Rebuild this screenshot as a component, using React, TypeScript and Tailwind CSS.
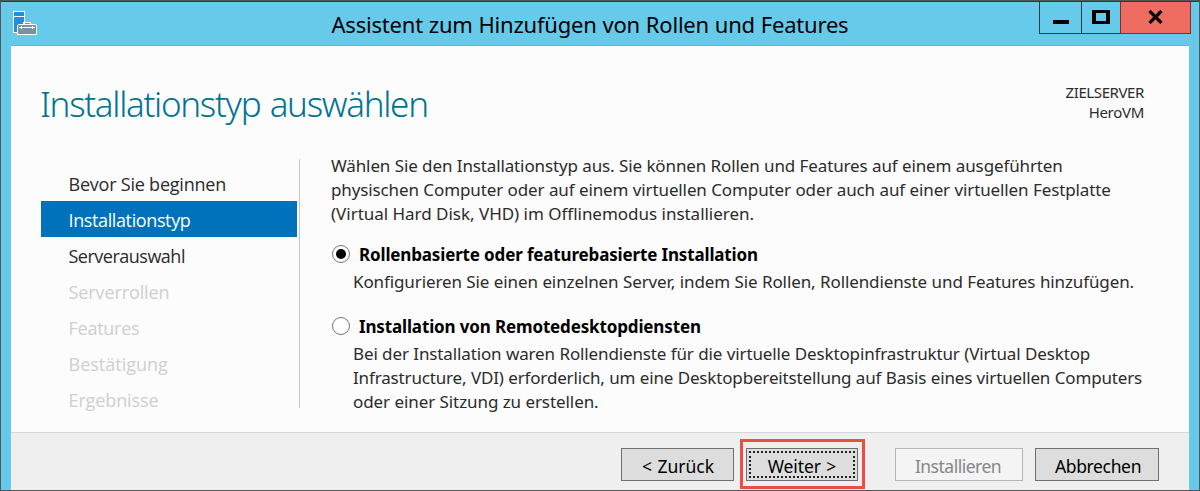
import type { ReactNode } from "react";

const steps = [
  { label: "Bevor Sie beginnen", style: "text-[#2b2b2b] tracking-[-0.22px]" },
  { label: "Installationstyp", style: "bg-[#0072bc] text-white tracking-[-0.38px]" },
  { label: "Serverauswahl", style: "text-[#2b2b2b] tracking-[-0.5px]" },
  { label: "Serverrollen", style: "text-[#cfcfcf] tracking-[-0.1px]" },
  { label: "Features", style: "text-[#cfcfcf] tracking-[-0.25px]" },
  { label: "Bestätigung", style: "text-[#cfcfcf]" },
  { label: "Ergebnisse", style: "text-[#cfcfcf] tracking-[-0.12px]" },
];

function Radio({ checked = false }: { checked?: boolean }) {
  return (
    <span className="flex size-[18px] shrink-0 items-center justify-center rounded-full border border-[#777] bg-white">
      {checked && <span className="size-[10px] rounded-full bg-black" />}
    </span>
  );
}

function Option({ title, titleStyle, checked, children }: { title: string; titleStyle: string; checked?: boolean; children: ReactNode }) {
  return (
    <div>
      <label className="flex h-6 items-start pt-[3px]">
        <Radio checked={checked} />
        <span className={`-mt-[2px] ml-[9px] font-bold text-black ${titleStyle}`}>{title}</span>
      </label>
      <div className="mt-1 pl-[21px]">{children}</div>
    </div>
  );
}

function ServerIcon() {
  return (
    <svg width="24" height="24" viewBox="0 0 24 24" shapeRendering="crispEdges">
      <rect x="0.5" y="0.5" width="11" height="21" fill="#2190dc" stroke="#fff" />
      <path d="M1 5.5H11" stroke="#fff" />
      <path d="M10.5 14V11.5H17.5V14" fill="none" stroke="#fff" />
      <path d="M12 12.5H16" stroke="#76909f" />
      <path d="M5.5 13.5H22.5L23.5 14.5V23.5H4.5V14.5Z" fill="#7893a5" stroke="#fff" />
      <path d="M6 16.5H22M8.500 15V18M19.500 15V18" stroke="#fff" />
    </svg>
  );
}

export default function App() {
  return (
    <div className="flex h-[491px] w-[1200px] flex-col overflow-hidden border border-[#555558] bg-[#66caea] font-['Noto_Sans',sans-serif] text-[17px] leading-6 text-[#2b2b2b]">
      <header className="flex h-[44px] shrink-0 items-start border-t border-[#2f3a42]">
        <div className="w-[238px] pt-[9px] pl-3">
          <ServerIcon />
        </div>
        <h1 className="flex-1 pt-[7px] pl-[92.5px] text-[22px] leading-[31px] tracking-[-0.2px] [word-spacing:0.3px] whitespace-nowrap text-black">
          Assistent zum Hinzufügen von Rollen und Features
        </h1>
        <div className="mr-[8px] flex h-[32px] border border-t-0 border-[#1d3d4b]">
          <button className="flex w-[41px] justify-center pt-[18px]">
            <span className="h-[4px] w-4 bg-black" />
          </button>
          <button className="flex w-[39px] justify-center border-l border-[#1d3d4b] pt-[8px]">
            <span className="h-[14px] w-[18px] border-4 border-t-[3px] border-b-[3px] border-black" />
          </button>
          <button className="-mr-px -mb-px flex w-[71px] justify-center border border-t-0 border-[#8a2b26] bg-[#ee6c60] pt-[8px]">
            <svg width="15" height="14" viewBox="0 0 15 14">
              <path d="M1.500 1L13.500 13M13.500 1L1.500 13" stroke="#000" strokeWidth="3.2" />
            </svg>
          </button>
        </div>
      </header>

      <div className="mx-[10px] flex min-h-0 flex-1 flex-col border-t border-[#70b2cc] bg-[#fcfcfc]">
        <div className="flex h-[107px] shrink-0 justify-between pr-[45px] pl-[29px]">
          <h2 className="pt-[31px] text-[35px] leading-[54px] font-light tracking-[-1.3px] [word-spacing:1.5px] whitespace-nowrap text-[#007394]">
            Installationstyp auswählen
          </h2>
          <div className="pt-[36px] text-right text-[15px] leading-5">
            <div className="tracking-[-0.4px]">ZIELSERVER</div>
            <div className="tracking-[-0.3px]">HeroVM</div>
          </div>
        </div>

        <main className="flex h-[279px] shrink-0 pl-[30px]">
          <nav className="mt-3 w-[256px] font-['Open_Sans',sans-serif] text-[18px]">
            {steps.map((s) => (
              <div key={s.label} className={`flex h-9 items-center pt-[2px] pl-[27.5px] ${s.style}`}>
                {s.label}
              </div>
            ))}
          </nav>
          <div className="mt-[6px] ml-[2px] h-[249px] w-px bg-[#c8c8c8]" />
          <section className="ml-[31px] pt-px whitespace-nowrap">
            <p className="tracking-[-0.13px] [word-spacing:0.2px]">Wählen Sie den Installationstyp aus. Sie können Rollen und Features auf einem ausgeführten</p>
            <p className="tracking-[-0.12px] [word-spacing:0.2px]">physischen Computer oder auf einem virtuellen Computer oder auch auf einer virtuellen Festplatte</p>
            <p className="mb-4 tracking-[-0.02px]">(Virtual Hard Disk, VHD) im Offlinemodus installieren.</p>
            <div className="flex flex-col gap-[20px] pl-px">
              <Option title="Rollenbasierte oder featurebasierte Installation" titleStyle="tracking-[-0.15px]" checked>
                <p className="tracking-[-0.11px] [word-spacing:0.2px]">
                  Konfigurieren Sie einen einzelnen Server, indem Sie Rollen, Rollendienste und Features hinzufügen.
                </p>
              </Option>
              <Option title="Installation von Remotedesktopdiensten" titleStyle="tracking-[-0.145px]">
                <p className="tracking-[-0.13px] [word-spacing:0.2px]">Bei der Installation waren Rollendienste für die virtuelle Desktopinfrastruktur (Virtual Desktop</p>
                <p className="tracking-[-0.155px] [word-spacing:0.2px]">Infrastructure, VDI) erforderlich, um eine Desktopbereitstellung auf Basis eines virtuellen Computers</p>
                <p className="tracking-[-0.07px]">oder einer Sitzung zu erstellen.</p>
              </Option>
            </div>
          </section>
        </main>

        <footer className="flex flex-1 items-start border-t border-[#d6d6d6] bg-[#efefef] pl-[610px] text-[17.5px] text-black">
          <button className="mt-[15px] h-[33px] w-[113px] border border-[#707070] bg-[#ddd] pt-[2px] pl-px [word-spacing:1px]">&lt; Zurück</button>
          <div className="mt-[6px] ml-[6px] h-[50px] w-[125px] border-3 border-[#ec4d45] p-[3px] pt-[6px]">
            <button className="h-[33px] w-[112px] border border-[#707070] bg-[#ddd] p-[2px]">
              <span className="flex h-full items-center justify-center border-2 border-dotted border-[#222] pt-[2px] tracking-[-0.1px] [word-spacing:1px]">Weiter &gt;</span>
            </button>
          </div>
          <button className="mt-[15px] ml-[30px] h-[33px] w-[128px] border border-[#b5b5b5] bg-[#f4f4f4] pt-[2px] pr-[2px] tracking-[-0.5px] text-[#878787]">
            Installieren
          </button>
          <button className="mt-[15px] ml-[12px] h-[33px] w-[124px] border border-[#707070] bg-[#ddd] pt-[2px] pl-[2px] tracking-[-0.35px]">Abbrechen</button>
        </footer>
      </div>
    </div>
  );
}
